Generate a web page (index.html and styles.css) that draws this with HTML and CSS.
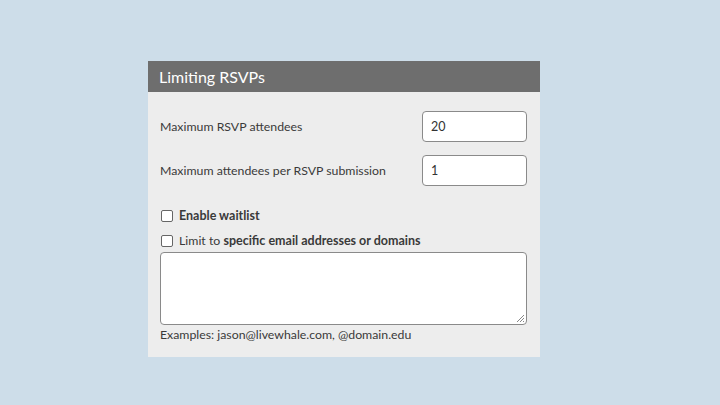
FILE: index.html
```html
<!DOCTYPE html>
<html lang="en">
<head>
  <meta charset="UTF-8">
  <title>Limiting RSVPs</title>
  <link rel="stylesheet" href="styles.css">
</head>
<body>
<div class="panel">
  <div class="panel-head">Limiting RSVPs</div>
  <div class="panel-body">
    <div class="row">
      <label class="row-label" for="max">Maximum RSVP attendees</label>
      <input class="num" id="max" type="text" value="20">
    </div>
    <div class="row">
      <label class="row-label" for="per">Maximum attendees per RSVP submission</label>
      <input class="num" id="per" type="text" value="1">
    </div>
    <label class="check check-first"><span class="box"></span><b>Enable waitlist</b></label>
    <label class="check"><span class="box"></span>Limit to&nbsp;<b>specific email addresses or domains</b></label>
    <div class="area">
      <svg class="grip" width="9" height="9" viewBox="0 0 9 9">
        <path d="M8 1L1 8M8 4L4 8M8 7L7 8" stroke="#888" stroke-width="1"/>
      </svg>
    </div>
    <div class="hint">Examples: jason@livewhale.com, @domain.edu</div>
  </div>
</div>
</body>
</html>
```

FILE: styles.css
```css
* {
  margin: 0;
  padding: 0;
  box-sizing: border-box;
}

body {
  background-color: #cddde9;
  font-family: Lato, "Open Sans", sans-serif;
  color: #3a3a3a;
  height: 405px;
}

.panel {
  width: 392px;
  margin: 61px 0 0 148px;
  background-color: #ededed;
}

.panel-head {
  height: 31px;
  line-height: 31px;
  padding-left: 11px;
  background-color: #6e6e6e;
  color: #fff;
  font-size: 16px;
}

.panel-body {
  padding: 19px 13px 15px 12px;
}

.row {
  display: flex;
  align-items: center;
  justify-content: space-between;
  margin-bottom: 13px;
}

.row-label {
  font-size: 12.3px;
}

.num {
  width: 105px;
  height: 31px;
  border: 1px solid #8a8a8a;
  border-radius: 4px;
  background-color: #fff;
  padding: 0 8px;
  font: 12.5px Lato, sans-serif;
  color: #333;
}

.check {
  display: flex;
  align-items: center;
  height: 15px;
  font-size: 12.3px;
  margin-bottom: 10px;
}

.check-first {
  margin-top: 22px;
}

.check b {
  font-weight: 700;
  font-size: 12.5px;
}

.box {
  width: 12px;
  height: 12px;
  margin: 0 6px 0 1px;
  border: 1px solid #666;
  border-radius: 2px;
  background-color: #fff;
}

.area {
  position: relative;
  height: 73px;
  margin-top: -6px;
  border: 1px solid #8a8a8a;
  border-radius: 4px;
  background-color: #fff;
}

.grip {
  position: absolute;
  right: 1px;
  bottom: 1px;
}

.hint {
  font-size: 12.3px;
  margin-top: 2px;
}
```
